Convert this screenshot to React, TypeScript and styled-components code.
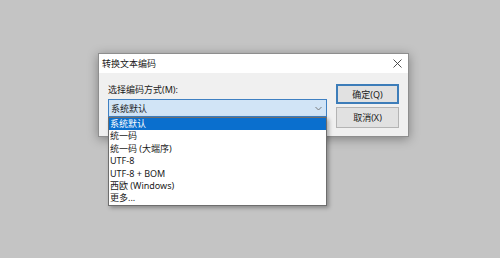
import React from "react";
import styled, { createGlobalStyle } from "styled-components";

const Global = createGlobalStyle`
  html, body { margin: 0; padding: 0; }
  body {
    background: #c4c4c4;
    font-family: "Noto Sans", "Noto Sans CJK SC", sans-serif;
    width: 500px;
    height: 258px;
    overflow: hidden;
  }
`;

const Desktop = styled.div`
  width: 500px;
  height: 258px;
  padding: 53px 0 0 98px;
  box-sizing: border-box;
`;

const Window = styled.div`
  width: 311px;
  height: 84px;
  box-sizing: border-box;
  border: 1px solid #8e8e8e;
  background: #f0f0f0;
  box-shadow: 0 2px 10px rgba(0, 0, 0, 0.35);
  display: flex;
  flex-direction: column;
`;

const TitleBar = styled.div`
  height: 19px;
  background: #ffffff;
  display: flex;
  align-items: center;
  justify-content: space-between;
  padding: 0 6px 0 3px;
  font-size: 9px;
  color: #1a1a1a;
`;

const Body = styled.div`
  flex: 1;
  display: flex;
  padding: 11px 9px 0 9px;
  gap: 9px;
`;

const LeftCol = styled.div`
  display: flex;
  flex-direction: column;
  width: 219px;
`;

const Label = styled.div`
  font-size: 9px;
  line-height: 12px;
  height: 12px;
  color: #1a1a1a;
  margin-bottom: 3px;
`;

const ComboWrap = styled.div`
  position: relative;
`;

const Combo = styled.div`
  height: 18px;
  box-sizing: border-box;
  border: 1px solid #3f80c2;
  background: #d1e4f6;
  display: flex;
  align-items: center;
  justify-content: space-between;
  padding: 0 4px 0 2px;
  font-size: 9px;
  color: #1a1a1a;
`;

const DropList = styled.ul`
  position: absolute;
  left: 0;
  top: 18px;
  width: 219px;
  margin: 0;
  padding: 0;
  list-style: none;
  box-sizing: border-box;
  border: 1px solid #6e6e6e;
  background: #ffffff;
  box-shadow: 2px 2px 4px rgba(0, 0, 0, 0.3);
  z-index: 2;
`;

const Item = styled.li<{ $selected?: boolean }>`
  height: 12.4px;
  line-height: 12.4px;
  font-size: 9px;
  padding-left: 1px;
  white-space: nowrap;
  color: ${(p) => (p.$selected ? "#ffffff" : "#1a1a1a")};
  background: ${(p) => (p.$selected ? "#0a6fce" : "transparent")};
`;

const RightCol = styled.div`
  display: flex;
  flex-direction: column;
  gap: 3px;
`;

const Button = styled.div<{ $default?: boolean }>`
  width: 63px;
  height: ${(p) => (p.$default ? "20px" : "21px")};
  box-sizing: border-box;
  border: ${(p) => (p.$default ? "2px solid #3d7db9" : "1px solid #b4b4b4")};
  background: #e1e1e1;
  display: flex;
  align-items: center;
  justify-content: center;
  font-size: 9px;
  color: #1a1a1a;
`;

const items = [
  "系统默认",
  "统一码",
  "统一码 (大端序)",
  "UTF-8",
  "UTF-8 + BOM",
  "西欧 (Windows)",
  "更多...",
];

export default function App() {
  return (
    <>
      <Global />
      <Desktop>
        <Window>
          <TitleBar>
            <span>转换文本编码</span>
            <svg width="9" height="9" viewBox="0 0 9 9">
              <path d="M0.5 0.5 L8.5 8.5 M8.5 0.5 L0.5 8.5" stroke="#3a3a3a" strokeWidth="0.9" fill="none" />
            </svg>
          </TitleBar>
          <Body>
            <LeftCol>
              <Label>选择编码方式(M):</Label>
              <ComboWrap>
                <Combo>
                  <span>系统默认</span>
                  <svg width="7" height="5" viewBox="0 0 7 5">
                    <path d="M0.5 1 L3.5 4 L6.5 1" stroke="#707070" strokeWidth="0.9" fill="none" />
                  </svg>
                </Combo>
                <DropList>
                  {items.map((t, i) => (
                    <Item key={t} $selected={i === 0}>
                      {t}
                    </Item>
                  ))}
                </DropList>
              </ComboWrap>
            </LeftCol>
            <RightCol>
              <Button $default>确定(Q)</Button>
              <Button>取消(X)</Button>
            </RightCol>
          </Body>
        </Window>
      </Desktop>
    </>
  );
}
